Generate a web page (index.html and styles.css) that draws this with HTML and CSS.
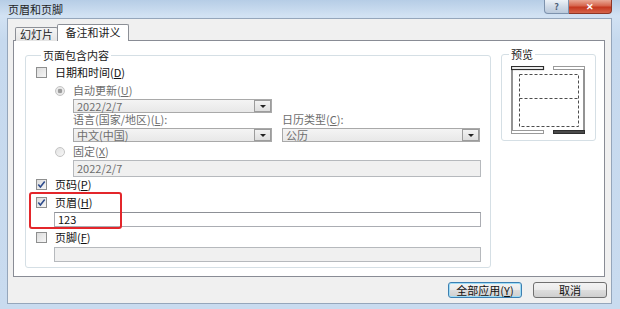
FILE: index.html
```html
<!DOCTYPE html>
<html lang="zh-CN">
<head>
<meta charset="utf-8">
<title>页眉和页脚</title>
<link rel="stylesheet" href="styles.css">
</head>
<body>
<div class="window">
  <div class="titlebar">
    <span class="title">页眉和页脚</span>
    <div class="controls">
      <span class="btn-help">?</span>
      <span class="btn-close">✕</span>
    </div>
  </div>
  <div class="client">
    <div class="tabs">
      <div class="tab">幻灯片</div>
      <div class="tab active">备注和讲义</div>
    </div>
    <div class="panel">
      <div class="group main">
        <span class="legend">页面包含内容</span>
        <div class="row r-date"><span class="cb"></span><span class="txt">日期和时间(<u>D</u>)</span></div>
        <div class="row r-auto sub"><span class="radio on"></span><span class="txt dis">自动更新(<u>U</u>)</span></div>
        <div class="combo c-date"><span class="ctext">2022/2/7</span><span class="cbtn"><i></i></span></div>
        <div class="labels"><span class="lab1">语言(国家/地区)(<u>L</u>):</span><span>日历类型(<u>C</u>):</span></div>
        <div class="combos">
          <div class="combo c-lang"><span class="ctext">中文(中国)</span><span class="cbtn"><i></i></span></div>
          <div class="combo c-cal"><span class="ctext">公历</span><span class="cbtn"><i></i></span></div>
        </div>
        <div class="row r-fixed sub"><span class="radio"></span><span class="txt dis">固定(<u>X</u>)</span></div>
        <div class="field f-fixed dis-field">2022/2/7</div>
        <div class="row r-num"><span class="cb"><svg width="11" height="11" viewBox="0 0 11 11"><path d="M2.3 5.4 L4.4 7.9 L8.7 2.6" fill="none" stroke="#2c4a8c" stroke-width="1.6"/></svg></span><span class="txt">页码(<u>P</u>)</span></div>
        <div class="row r-head"><span class="cb"><svg width="11" height="11" viewBox="0 0 11 11"><path d="M2.3 5.4 L4.4 7.9 L8.7 2.6" fill="none" stroke="#2c4a8c" stroke-width="1.6"/></svg></span><span class="txt">页眉(<u>H</u>)</span></div>
        <div class="field f-head">123</div>
        <div class="row r-foot"><span class="cb"></span><span class="txt">页脚(<u>F</u>)</span></div>
        <div class="field f-foot dis-field"></div>
        <div class="highlight"></div>
      </div>
      <div class="group preview">
        <span class="legend pv">预览</span>
        <svg class="page" width="74" height="68" viewBox="0 0 74 68">
          <line x1="1" y1="1" x2="1" y2="67" stroke="#6f6f6f" stroke-width="1.5"/>
          <line x1="73" y1="1" x2="73" y2="67" stroke="#6f6f6f" stroke-width="1.5"/>
          <rect x="0.5" y="0.5" width="32" height="3" fill="#fff" stroke="#2e2e2e" stroke-width="1.2"/>
          <rect x="42.5" y="0.5" width="31" height="3" fill="#fff" stroke="#9a9a9a"/>
          <rect x="0.5" y="64.5" width="32" height="3" fill="#fff" stroke="#9a9a9a"/>
          <rect x="42.5" y="64.5" width="31" height="3" fill="#4a4a4a" stroke="#2e2e2e"/>
          <rect x="8.5" y="8.5" width="59" height="52" fill="none" stroke="#4d4d4d" stroke-dasharray="3 2"/>
          <line x1="8.5" y1="32.5" x2="67.5" y2="32.5" stroke="#4d4d4d" stroke-dasharray="3 2"/>
        </svg>
      </div>
    </div>
    <div class="buttons">
      <span class="button default">全部应用(<u>Y</u>)</span>
      <span class="button">取消</span>
    </div>
  </div>
</div>
</body>
</html>
```
FILE: styles.css
```css
* { box-sizing: border-box; }
html, body { margin: 0; padding: 0; }
body {
  width: 620px; height: 309px; overflow: hidden;
  font-family: "Noto Sans CJK SC", "Noto Sans", sans-serif;
  font-size: 11px; line-height: 13px; color: #1a1a1a;
}
u { text-decoration: underline; text-underline-offset: 1px; }
.window {
  width: 620px; height: 309px;
  background: linear-gradient(#b6cde6, #d2e2f3 16px, #c6d9ee 40px, #c9dbef);
}
.titlebar {
  height: 18px; display: flex; justify-content: space-between; align-items: flex-start;
  padding-left: 8px; padding-right: 8px;
}
.title { line-height: 18px; color: #1e1e1e; }
.controls { display: flex; }
.btn-help {
  width: 25px; height: 14px; border: 1px solid #7d92ad; border-top: none;
  border-radius: 0 0 0 4px;
  background: linear-gradient(#edf2f8, #cdd8e6 55%, #bac9db);
  color: #4f6078; font-size: 9px; line-height: 12px; text-align: center; font-weight: bold;
  display: flex; align-items: center; justify-content: center;
}
.btn-close {
  width: 43px; height: 14px; border: 1px solid #8e3626; border-top: none; border-left: none;
  border-radius: 0 0 4px 0;
  background: linear-gradient(#e9a896, #d6654d 45%, #c5371f 55%, #d5644a);
  color: #fff; font-size: 9px; line-height: 12px; text-align: center; font-weight: bold;
  display: flex; align-items: center; justify-content: center;
}
.client {
  margin-left: 7px; width: 605px; height: 286px;
  border: 1px solid #95a6bb; background: #f0f0f0;
  padding: 0 5px;
}
.tabs {
  display: flex; align-items: flex-end; height: 17px; margin-top: 5px; margin-left: 2px;
  margin-bottom: -1px;
}
.tab {
  width: 43px; height: 14px; border: 1px solid #8c8f96; border-bottom: none;
  border-radius: 2px 2px 0 0;
  background: linear-gradient(#f4f4f4, #e4e4e4);
  text-align: center; line-height: 13px; color: #222;
}
.tab.active {
  position: relative; z-index: 1;
  width: 72px; height: 17px; margin-left: -1px; background: #fff; line-height: 15px;
}
.panel {
  width: 592px; height: 237px; border: 1px solid #898c95; background: #fff;
  display: flex; align-items: flex-start; padding-left: 11px;
}
.group { border: 1px solid #d5dfe5; border-radius: 3px; }
.legend {
  display: block; width: max-content; height: 12px; line-height: 12px;
  margin: -7px 0 0 5px; padding: 0 2px; background: #fff; color: #222;
}
.main {
  position: relative;
  margin-top: 14px; width: 466px; height: 213px; padding: 0 9px 0 10px;
}
.row { display: flex; align-items: center; height: 13px; gap: 8px; }
.row.sub { padding-left: 19px; }
.r-date { margin-top: 5px; }
.r-auto { margin-top: 5px; }
.r-fixed { margin-top: 3px; }
.r-num { margin-top: 1px; }
.r-head { margin-top: 5px; }
.r-foot { margin-top: 4px; }
.txt { color: #111; }
.dis { color: #6d6d6d; }
.cb {
  width: 11px; height: 11px; border: 1px solid #8e8f8f;
  background: linear-gradient(135deg, #dcdcdc, #f6f6f6);
  display: flex; align-items: center; justify-content: center; flex: none;
}
.cb svg { display: block; margin: -1px; }
.radio {
  width: 10px; height: 10px; border-radius: 50%; border: 1px solid #c4c4c4;
  background: linear-gradient(135deg, #e2e2e2, #f7f7f7); flex: none;
}
.radio.on { background: radial-gradient(circle, #9c9c9c 0 2px, #e9e9e9 2.6px); }
.combo {
  display: flex; height: 14px; border: 1px solid #a9a9a9;
  background: linear-gradient(#f4f4f4, #e8e8e8); color: #6d6d6d;
}
.ctext { flex: 1; padding-left: 3px; line-height: 12px; }
.cbtn {
  width: 17px; border: 1px solid #9c9c9c; margin: 0; background: linear-gradient(#f2f2f2, #dedede);
  display: flex; align-items: center; justify-content: center;
}
.cbtn i {
  width: 0; height: 0; border-left: 3px solid transparent; border-right: 3px solid transparent;
  border-top: 3px solid #222;
}
.c-date { margin-top: 2px; margin-left: 37px; width: 199px; }
.labels { display: flex; height: 11px; margin-top: 1px; margin-left: 37px; color: #6d6d6d; line-height: 11px; }
.lab1 { width: 209px; }
.combos { display: flex; gap: 10px; margin-top: 3px; margin-left: 37px; }
.c-lang { width: 199px; }
.c-cal { width: 198px; }
.field {
  height: 15px; border: 1px solid #abadb3; border-top-color: #8d9096;
  background: #fff; padding-left: 3px; line-height: 13px; color: #111;
}
.dis-field { background: #f0f0f0; border-color: #b6b9bd; color: #6d6d6d; }
.f-fixed { margin-top: 2px; margin-left: 37px; height: 17px; line-height: 15px; }
.f-head { margin-top: 3px; margin-left: 18px; }
.f-foot { margin-top: 3px; margin-left: 18px; }
.highlight {
  position: absolute; left: 3px; top: 136px; width: 93px; height: 37px;
  border: 2px solid #e3262b; border-radius: 3px;
}
.preview {
  margin-top: 13px; margin-left: 10px; width: 95px; height: 87px; padding-left: 9px;
}
.legend.pv { margin-left: -2px; }
.page { display: block; margin-top: 6px; }
.buttons {
  display: flex; justify-content: flex-end; gap: 11px; margin-top: 5px; padding-right: 0;
  margin-right: -1px;
}
.button {
  width: 74px; height: 16px; border: 1px solid #707070; border-radius: 3px;
  background: linear-gradient(#f3f3f3, #ebebeb 48%, #dddddd 52%, #cfcfcf);
  text-align: center; line-height: 14px; color: #111;
}
.button.default { border-color: #3c7fb1; box-shadow: inset 0 0 0 1px #9fdcf6; }
```
